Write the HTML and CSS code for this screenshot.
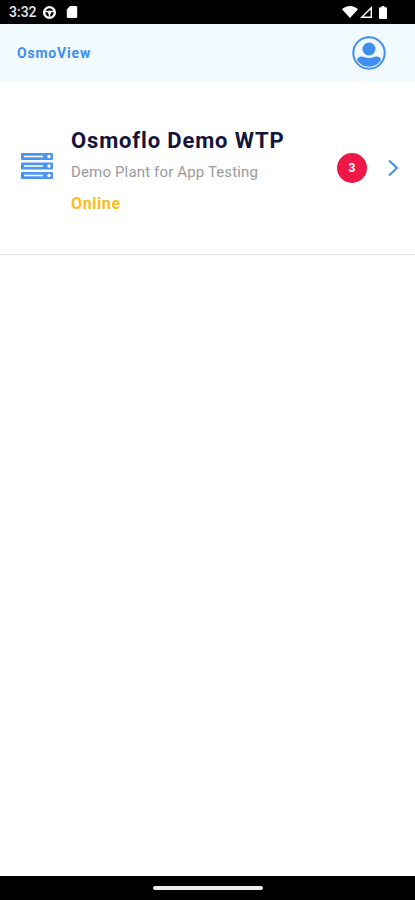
FILE: index.html
```html
<!DOCTYPE html>
<html lang="en">

<head>
    <meta charset="UTF-8">
    <meta name="viewport" content="width=device-width, initial-scale=1.0">
    <title>OsmoView</title>
    <link rel="stylesheet" href="styles.css">
</head>

<body>
    <div class="phone">
        <div class="status-bar">
            <div class="status-left">
                <span class="clock">3:32</span>
                <svg class="status-icon" width="15" height="15" viewBox="0 0 14 14">
                    <circle cx="7" cy="7" r="5" fill="none" stroke="#fff" stroke-width="2.2"/>
                    <circle cx="7" cy="7" r="1.6" fill="#fff"/>
                    <path d="M2 6h10M7 8v4" stroke="#fff" stroke-width="1.4"/>
                </svg>
                <svg class="status-icon sim" width="12" height="14" viewBox="0 0 12 14">
                    <path d="M4 1h6a1.2 1.2 0 0 1 1.2 1.2v9.6A1.2 1.2 0 0 1 10 13H2a1.2 1.2 0 0 1-1.2-1.2V4.4z" fill="#fff"/>
                </svg>
            </div>
            <div class="status-right">
                <svg class="wifi" width="16" height="12" viewBox="0 0 16 12">
                    <path d="M0 3.2C2 1.3 4.8 0 8 0s6 1.3 8 3.2L8 12z" fill="#fff"/>
                </svg>
                <svg class="signal" width="12" height="12" viewBox="0 0 12 12">
                    <path d="M12 0v12H0zM10.600 3.400 3.400 10.600h7.200z" fill="#fff" fill-rule="evenodd"/>
                </svg>
                <svg width="8" height="13" viewBox="0 0 8 13">
                    <path d="M2.600 0h2.800v1.200H7a1 1 0 0 1 1 1V12a1 1 0 0 1-1 1H1a1 1 0 0 1-1-1V2.200a1 1 0 0 1 1-1h1.600z" fill="#fff"/>
                </svg>
            </div>
        </div>

        <header class="app-bar">
            <span class="app-title">OsmoView</span>
            <svg class="profile" width="34" height="34" viewBox="0 0 34 34">
                <defs>
                    <clipPath id="avatar-clip">
                        <circle cx="17" cy="17" r="13.800"/>
                    </clipPath>
                </defs>
                <circle cx="17" cy="17" r="15.700" fill="none" stroke="#3f8ef0" stroke-width="2"/>
                <circle cx="17" cy="13" r="6.500" fill="#3f8ef0"/>
                <path d="M5 32V24.500c0-2.500 2-4 4.500-4 2.500 0 4 1.500 7.500 1.500s5-1.500 7.500-1.500c2.500 0 4.500 1.500 4.500 4V32z" fill="#3f8ef0" clip-path="url(#avatar-clip)"/>
            </svg>
        </header>

        <main class="content">
            <div class="plant-row">
                <svg class="plant-icon" width="32" height="26" viewBox="0 0 32 26">
                    <g fill="#4a94f2">
                        <rect x="0" y="0" width="32" height="7" rx="1"/>
                        <rect x="0" y="9.500" width="32" height="7" rx="1"/>
                        <rect x="0" y="19" width="32" height="7" rx="1"/>
                    </g>
                    <g fill="#fff">
                        <rect x="3" y="2.700" width="19" height="1.600"/>
                        <rect x="3" y="12.200" width="19" height="1.600"/>
                        <rect x="3" y="21.700" width="19" height="1.600"/>
                        <circle cx="28" cy="3.500" r="1.700"/>
                        <circle cx="28" cy="13" r="1.700"/>
                        <circle cx="28" cy="22.500" r="1.700"/>
                    </g>
                </svg>
                <div class="plant-info">
                    <div class="plant-name">Osmoflo Demo WTP</div>
                    <div class="plant-desc">Demo Plant for App Testing</div>
                    <div class="plant-status">Online</div>
                </div>
                <span class="badge">3</span>
                <svg class="chevron" width="12" height="18" viewBox="0 0 12 18">
                    <path d="M2 1.500 10 9l-8 7.500" fill="none" stroke="#3f8ef0" stroke-width="2"/>
                </svg>
            </div>
        </main>

        <div class="nav-bar">
            <div class="home-pill"></div>
        </div>
    </div>
</body>

</html>
```
FILE: styles.css
```css
* {
    box-sizing: border-box;
}

body {
    margin: 0;
    font-family: Roboto, "Liberation Sans", sans-serif;
    background: #fff;
}

.phone {
    display: flex;
    flex-direction: column;
    height: 900px;
}

.status-bar {
    display: flex;
    justify-content: space-between;
    align-items: center;
    height: 24px;
    padding: 0 28px 0 9px;
    background: #000;
    color: #fff;
}

.status-left {
    display: flex;
    align-items: center;
    gap: 5px;
}

.clock {
    font-size: 14px;
    font-weight: 500;
    color: #e8e8e8;
}

.status-right {
    display: flex;
    align-items: center;
}

.wifi {
    margin-right: 2px;
}

.signal {
    margin-right: 7px;
}

.status-icon {
    display: block;
}

.sim {
    margin-left: 4px;
}

.app-bar {
    display: flex;
    justify-content: space-between;
    align-items: center;
    height: 58px;
    padding: 0 29px 0 17px;
    background: #f1faff;
}

.app-title {
    font-size: 14px;
    font-weight: 700;
    letter-spacing: 0.8px;
    color: #3f8ef0;
}

.content {
    flex: 1;
}

.plant-row {
    display: flex;
    align-items: center;
    height: 173px;
    padding: 0 16px 0 21px;
    border-bottom: 1px solid #e2e2e2;
}

.plant-icon {
    flex-shrink: 0;
    margin-right: 18px;
    margin-bottom: 4px;
}

.plant-info {
    flex: 1;
    margin-top: 5px;
}

.plant-name {
    font-size: 22px;
    font-weight: 700;
    letter-spacing: 0.85px;
    color: #14143c;
    line-height: 30px;
}

.plant-desc {
    margin-top: 6px;
    font-size: 15px;
    letter-spacing: 0.15px;
    color: #9a9a9a;
    line-height: 20px;
}

.plant-status {
    margin-top: 11px;
    font-size: 16px;
    font-weight: 700;
    letter-spacing: 0.6px;
    color: #fbbc1c;
    line-height: 22px;
}

.badge {
    display: flex;
    justify-content: center;
    align-items: center;
    width: 30px;
    height: 30px;
    margin-right: 20px;
    border-radius: 50%;
    background: #ee1848;
    color: #fff;
    font-size: 12px;
    font-weight: 700;
}

.nav-bar {
    display: flex;
    justify-content: center;
    align-items: center;
    height: 24px;
    background: #000;
}

.home-pill {
    width: 110px;
    height: 4px;
    border-radius: 2px;
    background: #f2f2f2;
}
```
